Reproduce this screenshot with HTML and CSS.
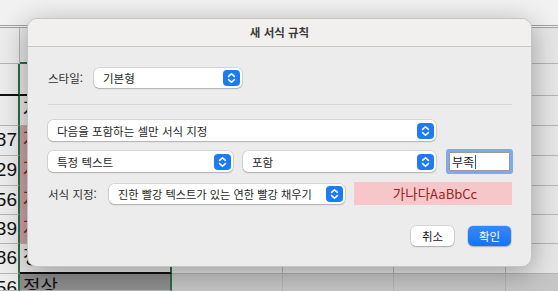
FILE: index.html
```html
<!DOCTYPE html>
<html lang="ko">
<head>
    <meta charset="UTF-8">
    <meta name="viewport" content="width=device-width, initial-scale=1.0">
    <title>새 서식 규칙</title>
    <link rel="stylesheet" href="styles.css">
</head>
<body>

    <!-- Spreadsheet behind the sheet dialog -->
    <div class="sheet">
        <div class="row row-top">
            <div class="cell c0"></div><div class="cell c1"></div><div class="cell c2"></div><div class="cell c3"></div><div class="cell c4"></div><div class="cell c5"></div>
        </div>
        <div class="row h36">
            <div class="cell c0"></div><div class="cell c1 sel-top"></div><div class="cell c2"></div><div class="cell c3"></div><div class="cell c4"></div><div class="cell c5"></div>
        </div>
        <div class="row h32">
            <div class="cell c0 edge black-bottom"></div><div class="cell c1 sel black-bottom"></div><div class="cell c2"></div><div class="cell c3"></div><div class="cell c4"></div><div class="cell c5"></div>
        </div>
        <div class="row h30">
            <div class="cell c0 edge"></div><div class="cell c1 sel">자료</div><div class="cell c2"></div><div class="cell c3"></div><div class="cell c4"></div><div class="cell c5"></div>
        </div>
        <div class="row h30">
            <div class="cell c0 edge num">87</div><div class="cell c1 sel red">자료</div><div class="cell c2"></div><div class="cell c3"></div><div class="cell c4"></div><div class="cell c5"></div>
        </div>
        <div class="row h30">
            <div class="cell c0 edge num">29</div><div class="cell c1 sel red">자료</div><div class="cell c2"></div><div class="cell c3"></div><div class="cell c4"></div><div class="cell c5"></div>
        </div>
        <div class="row h29">
            <div class="cell c0 edge num">56</div><div class="cell c1 sel red">자료</div><div class="cell c2"></div><div class="cell c3"></div><div class="cell c4"></div><div class="cell c5"></div>
        </div>
        <div class="row h29">
            <div class="cell c0 edge num">39</div><div class="cell c1 sel red">자료</div><div class="cell c2"></div><div class="cell c3"></div><div class="cell c4"></div><div class="cell c5"></div>
        </div>
        <div class="row h30">
            <div class="cell c0 edge num">86</div><div class="cell c1 sel black-bottom">정상</div><div class="cell c2"></div><div class="cell c3"></div><div class="cell c4"></div><div class="cell c5"></div>
        </div>
        <div class="row h17 dim">
            <div class="cell c0 edge num">56</div><div class="cell c1 sel grey">정상</div><div class="cell c2"></div><div class="cell c3"></div><div class="cell c4"></div><div class="cell c5"></div>
        </div>
    </div>

    <!-- New formatting rule sheet -->
    <div class="dialog">
        <div class="dialog-title">새 서식 규칙</div>
        <div class="dialog-body">
            <div class="line line-style">
                <span class="label label-style">스타일:</span>
                <div class="popup w-style">
                    <span class="popup-text">기본형</span>
                    <svg class="stepper" width="17" height="16" viewBox="0 0 17 16"><rect width="17" height="16" rx="4" fill="#1f7bf4"/><path d="M5.6 6.4 8.5 3.7 11.4 6.4M5.6 9.6 8.5 12.3 11.4 9.6" fill="none" stroke="#fff" stroke-width="1.5" stroke-linecap="round" stroke-linejoin="round"/></svg>
                </div>
            </div>

            <div class="separator"></div>

            <div class="popup w-type">
                <span class="popup-text">다음을 포함하는 셀만 서식 지정</span>
                <svg class="stepper" width="17" height="16" viewBox="0 0 17 16"><rect width="17" height="16" rx="4" fill="#1f7bf4"/><path d="M5.6 6.4 8.5 3.7 11.4 6.4M5.6 9.6 8.5 12.3 11.4 9.6" fill="none" stroke="#fff" stroke-width="1.5" stroke-linecap="round" stroke-linejoin="round"/></svg>
            </div>

            <div class="line line-cond">
                <div class="popup w-what">
                    <span class="popup-text">특정 텍스트</span>
                    <svg class="stepper" width="17" height="16" viewBox="0 0 17 16"><rect width="17" height="16" rx="4" fill="#1f7bf4"/><path d="M5.6 6.4 8.5 3.7 11.4 6.4M5.6 9.6 8.5 12.3 11.4 9.6" fill="none" stroke="#fff" stroke-width="1.5" stroke-linecap="round" stroke-linejoin="round"/></svg>
                </div>
                <div class="popup w-op">
                    <span class="popup-text">포함</span>
                    <svg class="stepper" width="17" height="16" viewBox="0 0 17 16"><rect width="17" height="16" rx="4" fill="#1f7bf4"/><path d="M5.6 6.4 8.5 3.7 11.4 6.4M5.6 9.6 8.5 12.3 11.4 9.6" fill="none" stroke="#fff" stroke-width="1.5" stroke-linecap="round" stroke-linejoin="round"/></svg>
                </div>
                <div class="textfield">부족<span class="caret"></span></div>
            </div>

            <div class="line line-format">
                <span class="label label-format">서식 지정:</span>
                <div class="popup w-format">
                    <span class="popup-text">진한 빨강 텍스트가 있는 연한 빨강 채우기</span>
                    <svg class="stepper" width="17" height="16" viewBox="0 0 17 16"><rect width="17" height="16" rx="4" fill="#1f7bf4"/><path d="M5.6 6.4 8.5 3.7 11.4 6.4M5.6 9.6 8.5 12.3 11.4 9.6" fill="none" stroke="#fff" stroke-width="1.5" stroke-linecap="round" stroke-linejoin="round"/></svg>
                </div>
                <div class="preview"><span class="preview-ko">가나다</span>AaBbCc</div>
            </div>

            <div class="buttons">
                <button class="btn">취소</button>
                <button class="btn btn-primary">확인</button>
            </div>
        </div>
    </div>

</body>
</html>
```

FILE: styles.css
```css
* {
    margin: 0;
    padding: 0;
    box-sizing: border-box;
}
body {
    width: 558px;
    height: 291px;
    overflow: hidden;
    position: relative;
    background: #e9e9e9;
    font-family: "Noto Sans CJK KR", "Liberation Sans", sans-serif;
}

/* spreadsheet */
.sheet {
    display: flex;
    flex-direction: column;
}
.row {
    display: flex;
}
.row-top { height: 28px; }
.h36 { height: 36px; }
.h32 { height: 32px; }
.h30 { height: 30px; }
.h29 { height: 29px; }
.h17 { height: 17px; }
.cell {
    border-right: 1px solid #b4b4b4;
    border-bottom: 1px solid #b4b4b4;
    background: #e6e6e6;
    overflow: hidden;
    white-space: nowrap;
    font-family: "Liberation Sans", "Noto Sans CJK KR", sans-serif;
    font-size: 19px;
    line-height: 28px;
    color: #111;
}
.c0 { width: 20px; background: #ececec; }
.c1 { width: 152px; padding-left: 3px; }
.c2 { width: 111px; }
.c3 { width: 111px; }
.c4 { width: 112px; }
.c5 { width: 52px; border-right: none; }
.row-top .cell {
    background: #f1f1f1;
    border-right: none;
    border-bottom: 3px double #a3a3a3;
}
.num {
    text-align: right;
    padding-right: 1px;
    direction: rtl;
}
.edge { border-right: 2px solid #2f6b45; }
.sel { border-right: 2px solid #2f6b45; }
.sel-top { border-bottom: 2px solid #2f6b45; }
.black-bottom { border-bottom: 2px solid #111; }
.red {
    background: #c9a2a3;
    color: #7e1f22;
}
.grey { background: #8e8e8e; }
.dim .c2, .dim .c3, .dim .c4, .dim .c5 {
    background: #c6c6c6;
    border-bottom: none;
}

/* dialog */
.dialog {
    position: absolute;
    left: 27px;
    top: 18px;
    width: 505px;
    height: 249px;
    background: #ececec;
    border: 1px solid #c4c4c4;
    border-radius: 10px;
    box-shadow: 0 6px 28px rgba(0, 0, 0, 0.32);
    overflow: hidden;
    color: #262626;
    font-size: 11.5px;
}
.dialog-title {
    height: 28px;
    background: #f1f0ef;
    border-bottom: 1px solid #c8c8c8;
    text-align: center;
    font-weight: bold;
    font-size: 11.5px;
    line-height: 27px;
    color: #3a3a3a;
}
.dialog-body {
    padding: 0 19px 0 20px;
    display: flex;
    flex-direction: column;
}
.line {
    display: flex;
    align-items: center;
}
.line-style {
    margin-top: 21px;
    height: 20px;
    gap: 9px;
}
.separator {
    margin-top: 16px;
    height: 1px;
    background: #d6d6d6;
}
.label {
    color: #2f2f2f;
    white-space: nowrap;
    flex-shrink: 0;
}
.label-style { width: 37px; }
.label-format { width: 52px; margin-right: 9px; }

.popup {
    display: flex;
    align-items: center;
    height: 20px;
    background: #fff;
    border-radius: 5px;
    box-shadow: 0 0 0 0.5px rgba(0, 0, 0, 0.18), 0 1px 1.5px rgba(0, 0, 0, 0.18);
    padding: 0 2px 0 9px;
    flex-shrink: 0;
}
.popup-text {
    flex: 1;
    color: #1f1f1f;
    white-space: nowrap;
    overflow: hidden;
}
.stepper {
    flex-shrink: 0;
}
.w-style { width: 148px; }
.w-type {
    width: 388px;
    height: 21px;
    margin-top: 15px;
}
.line-cond {
    margin-top: 10px;
    height: 21px;
    gap: 10px;
}
.w-what { width: 185px; height: 21px; }
.w-op { width: 193px; height: 21px; }
.textfield {
    width: 61px;
    height: 19px;
    margin-left: 3px;
    background: #fff;
    border: 1px solid #9a9a9a;
    box-shadow: 0 0 0 3px #7ea8f0;
    border-radius: 1px;
    padding-left: 2px;
    font-size: 12px;
    line-height: 17px;
    color: #1a1a1a;
    display: flex;
    align-items: center;
}
.caret {
    display: inline-block;
    width: 1px;
    height: 14px;
    background: #1b5fd6;
    margin-left: 1px;
}

.line-format {
    margin-top: 10px;
    height: 23px;
}
.w-format {
    width: 236px;
    font-size: 11.2px;
}
.preview {
    width: 158px;
    height: 23px;
    margin-left: 9px;
    background: #f7c6c8;
    color: #9c1d22;
    text-align: center;
    font-size: 13px;
    line-height: 23px;
    padding-left: 4px;
}
.preview-ko {
    font-size: 13.5px;
}

.buttons {
    margin-top: 21px;
    display: flex;
    justify-content: flex-end;
    gap: 14px;
    padding-right: 1px;
}
.btn {
    width: 43px;
    height: 20px;
    border: none;
    border-radius: 5px;
    background: #fff;
    box-shadow: 0 0 0 0.5px rgba(0, 0, 0, 0.18), 0 1px 1.5px rgba(0, 0, 0, 0.2);
    font-family: "Noto Sans CJK KR", "Liberation Sans", sans-serif;
    font-size: 11.5px;
    color: #222;
}
.btn-primary {
    background: linear-gradient(#3489fb, #1673f2);
    color: #fff;
}
```
